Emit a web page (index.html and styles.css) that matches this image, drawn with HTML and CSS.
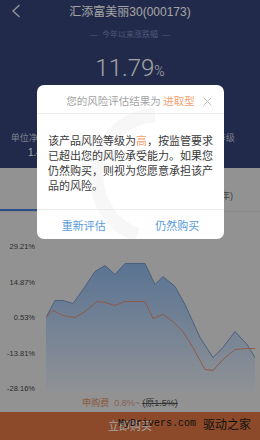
FILE: index.html
```html
<!DOCTYPE html>
<html lang="zh-CN">
<head>
<meta charset="utf-8">
<title>汇添富美丽30</title>
<link rel="stylesheet" href="styles.css">
</head>
<body>
<div class="page">
  <div class="hero">
    <header class="topbar">
      <span class="back"><svg width="10" height="14" viewBox="0 0 10 14"><polyline points="8.5,1 2,7 8.5,13" fill="none" stroke="#e4e7ef" stroke-width="1.4"/></svg></span>
      <h1 class="title">汇添富美丽30(000173)</h1>
    </header>
    <div class="sub"><span class="rule"></span><span>今年以来涨跌幅</span><span class="rule"></span></div>
    <div class="big">11.79<span class="pct">%</span></div>
    <div class="stats">
      <div class="stat"><div class="lab">单位净值(06-03)</div><div class="val">1.4270</div></div>
      <div class="stat"><div class="lab">日涨跌幅</div><div class="val">+0.52%</div></div>
      <div class="stat"><div class="lab">风险等级</div><div class="val">高</div></div>
    </div>
  </div>
  <div class="tabs">
    <div class="tab active">业绩走势</div>
    <div class="tab">历史净值</div>
    <div class="tab range">(近一年)</div>
  </div>
  <div class="chart">
    <div class="ylabels">
      <span>29.21%</span>
      <span>14.87%</span>
      <span>0.53%</span>
      <span>-13.81%</span>
      <span>-28.16%</span>
    </div>
    <svg class="plot" width="214" height="153" viewBox="46 241.5 214 153" preserveAspectRatio="none">
      <defs>
        <linearGradient id="fill" x1="0" y1="0" x2="0" y2="1">
          <stop offset="0" stop-color="#8db5e7"/>
          <stop offset="1" stop-color="#e0e4ea"/>
        </linearGradient>
      </defs>
      <polygon fill="url(#fill)" points="46,318 55,301 63,301 73,304 83,290 95,272 105,266 115,275 125,264 145,264 155,285 163,277 175,287 185,305 200,338 213,358 223,348 235,332 247,345 255,358 255,392 46,392"/>
      <polyline fill="none" stroke="#7496c8" stroke-width="1" points="46,318 55,301 63,301 73,304 83,290 95,272 105,266 115,275 125,264 145,264 155,285 163,277 175,287 185,305 200,338 213,358 223,348 235,332 247,345 255,358"/>
      <polyline fill="none" stroke="#e08d71" stroke-width="1" points="46,318 53,311 63,316 75,318 85,312 97,302 105,303 115,306 125,302 145,302 153,319 163,315 173,322 183,332 193,348 205,370 213,371 223,360 235,350 247,349 255,349"/>
    </svg>
  </div>
  <div class="fee"><span class="fee-l">申购费</span><span class="fee-v">0.8%~</span><s class="fee-o">(原1.5%)</s></div>
  <div class="buy">立即购买</div>
</div>

<div class="mask"></div>

<div class="dialog">
  <svg class="deco" width="187" height="156" viewBox="0 0 187 156"><path d="M118 30 A62 62 0 0 0 100 150" fill="none" stroke="#f7f7f7" stroke-width="14"/></svg>
  <div class="dlg-head">您的风险评估结果为 <em>进取型</em>
    <span class="close"><svg width="9" height="9" viewBox="0 0 9 9"><path d="M0.5 0.5 L8.5 8.5 M8.5 0.5 L0.5 8.5" stroke="#bdbdbd" stroke-width="1"/></svg></span>
  </div>
  <div class="dlg-body">该产品风险等级为<em>高</em>，按监管要求<br>已超出您的风险承受能力。如果您<br>仍然购买，则视为您愿意承担该产<br>品的风险。</div>
  <div class="dlg-btns">
    <span class="btn">重新评估</span>
    <span class="btn">仍然购买</span>
  </div>
</div>

<div class="watermark"><span class="wm-en">MyDrivers.com</span><span class="wm-cn">驱动之家</span></div>
</body>
</html>
```

FILE: styles.css
```css
* { box-sizing: border-box; margin: 0; padding: 0; }
html, body { width: 260px; height: 440px; overflow: hidden; }
body {
  font-family: "Liberation Sans", "Noto Sans CJK SC", sans-serif;
  background: #e4e4e4;
  position: relative;
}
.page { width: 260px; height: 440px; display: flex; flex-direction: column; }

.hero { background: #354375; height: 168px; color: #fff; }
.topbar { position: relative; height: 25px; display: flex; align-items: center; justify-content: center; }
.back { position: absolute; left: 11px; top: 4px; width: 10px; height: 14px; display: flex; }
.title { font-size: 12px; font-weight: normal; line-height: 25px; color: #fff; }

.sub { margin-top: 5px; height: 10px; display: flex; align-items: center; justify-content: center; gap: 4px; font-size: 8px; line-height: 10px; color: #7a8aba; }
.rule { width: 8px; height: 1px; background: #5b6a9f; }

.big { margin-top: 14px; height: 28px; line-height: 28px; text-align: center; font-family: Roboto, "Liberation Sans", sans-serif; font-weight: 300; font-size: 24px; color: #fff; }
.big .pct { font-size: 14px; }

.stats { margin-top: 50px; display: grid; grid-template-columns: 1fr 1fr 1fr; text-align: center; }
.lab { font-size: 9px; line-height: 12px; color: #c2c8dc; }
.val { margin-top: 2px; font-size: 10px; line-height: 14px; color: #fff; }

.tabs { height: 44px; display: flex; border-bottom: 1px solid #d6d6d6; }
.tab { padding-top: 21px; font-size: 9px; line-height: 14px; text-align: center; color: #555; }
.tab.active { width: 120px; border-bottom: 2px solid #4978d0; color: #4978d0; }
.tab:nth-child(2) { width: 70px; }
.tab.range { flex: 1; text-align: right; padding-right: 27px; color: #666; }

.chart { height: 183px; padding-top: 29px; display: grid; grid-template-columns: 46px 214px; align-items: start; }
.ylabels { height: 153px; display: flex; flex-direction: column; justify-content: space-between; align-items: flex-end; padding-right: 11px; font-size: 7.5px; line-height: 11px; color: #444; }
.plot { display: block; }

.fee { height: 17px; line-height: 17px; text-align: center; font-size: 9px; display: flex; justify-content: center; gap: 5px; }
.fee-l { color: #db8d5b; }
.fee-v { color: #d49a86; margin-right: -3px; }
.fee-o { color: #505050; text-decoration: line-through; }

.buy { height: 28px; background: #db7442; color: #fff; font-size: 11px; line-height: 28px; text-align: center; }

.mask { position: absolute; inset: 0; background: rgba(0, 0, 0, 0.36); }

.dialog {
  position: absolute; left: 37px; top: 85px; width: 187px;
  background: #fff; border-radius: 7px; overflow: hidden;
  font-family: "Noto Sans CJK SC", sans-serif;
}
.deco { position: absolute; left: 0; top: 0; }
.dlg-head { position: relative; padding-top: 4px; height: 29px; line-height: 24px; text-align: center; font-size: 10.5px; color: #a3a3a3; border-bottom: 1px solid #ececec; }
.dlg-head em { font-style: normal; color: #f3a06e; }
.close { position: absolute; right: 12px; top: 12px; width: 9px; height: 9px; display: flex; }
.dlg-body { position: relative; padding: 19px 8px 16px 11px; font-size: 11px; line-height: 15px; color: #3a3a3a; white-space: nowrap; }
.dlg-body em { font-style: normal; color: #f3a06e; }
.dlg-btns { position: relative; display: flex; height: 30px; border-top: 1px solid #ececec; }
.btn { flex: 1; text-align: center; line-height: 31px; font-size: 11px; color: #5b9bd8; }

.watermark { position: absolute; left: 118px; top: 416px; display: flex; align-items: center; gap: 7px; color: #111; }
.wm-en { font-family: "Liberation Mono", monospace; font-size: 10px; line-height: 16px; }
.wm-cn { font-family: "Noto Sans CJK SC", sans-serif; font-size: 12px; line-height: 16px; }
```
